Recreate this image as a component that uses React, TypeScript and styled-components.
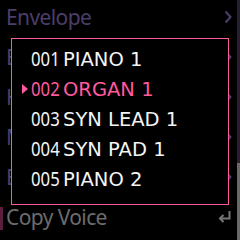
import React from "react";
import styled, {createGlobalStyle} from "styled-components";

const GlobalStyle = createGlobalStyle`
  html, body {
    margin: 0;
    padding: 0;
    background: #000;
    overflow: hidden;
  }
`;

const menuItems = [
    {label: "Envelope", sub: true},
    {label: "Effects", sub: true},
    {label: "Harmonics", sub: true},
    {label: "Modulation", sub: true},
    {label: "EQ", sub: true},
    {label: "Copy Voice", sub: false, marked: true},
];

const voices = [
    {num: "001", name: "PIANO 1"},
    {num: "002", name: "ORGAN 1"},
    {num: "003", name: "SYN LEAD 1"},
    {num: "004", name: "SYN PAD 1"},
    {num: "005", name: "PIANO 2"},
];

const selectedVoice = 1;

const Chevron = () => (
    <svg width="8" height="14" viewBox="0 0 8 14">
        <path d="M1.5 1.5 L6.5 7 L1.5 12.5" fill="none" stroke="#4d3f6e" strokeWidth="2"/>
    </svg>
);

const ReturnIcon = () => (
    <svg width="15" height="14" viewBox="0 0 15 14">
        <path d="M12.5 1 V8.5 H3" fill="none" stroke="#777" strokeWidth="2"/>
        <path d="M6.5 5 L3 8.5 L6.5 12" fill="none" stroke="#777" strokeWidth="2"/>
    </svg>
);

const App: React.FC = () => {
    return (
        <>
            <GlobalStyle/>
            <Screen>
                <MenuList>
                    {menuItems.map((item) => (
                        <MenuRow key={item.label} marked={!!item.marked}>
                            <MenuLabel dim={item.sub}>{item.label}</MenuLabel>
                            {item.sub ? <Chevron/> : <ReturnIcon/>}
                        </MenuRow>
                    ))}
                </MenuList>
                <ScrollTrack>
                    <ScrollThumb/>
                </ScrollTrack>
                <Popup>
                    {voices.map((v, i) => (
                        <VoiceRow key={v.num} selected={i === selectedVoice}>
                            <Caret selected={i === selectedVoice}/>
                            <VoiceNum>{v.num}</VoiceNum>
                            <VoiceName>{v.name}</VoiceName>
                        </VoiceRow>
                    ))}
                </Popup>
            </Screen>
        </>
    );
};

export default App;

const Screen = styled.div`
  position: relative;
  width: 240px;
  height: 240px;
  background: #000;
  display: flex;
  overflow: hidden;
  font-family: "Noto Sans", "Open Sans", sans-serif;
`;

const MenuList = styled.div`
  flex: 1;
  display: flex;
  flex-direction: column;
  margin-top: -3px;
`;

const MenuRow = styled.div<{ marked: boolean }>`
  height: 40px;
  flex-shrink: 0;
  display: flex;
  align-items: center;
  justify-content: space-between;
  padding: 0 5px 0 6px;
  background: ${({marked}) => marked
    ? "linear-gradient(#5a1f3d, #5a1f3d) 0 10px / 3px 23px no-repeat"
    : "none"};
`;

const MenuLabel = styled.span<{ dim: boolean }>`
  font-size: 21px;
  letter-spacing: -0.6px;
  color: ${({dim}) => dim ? "#4b3e68" : "#6c6c6c"};
`;

const ScrollTrack = styled.div`
  width: 3px;
  height: 240px;
  background: #281f31;
  display: flex;
  flex-direction: column;
  justify-content: flex-end;
`;

const ScrollThumb = styled.div`
  height: 77px;
  background: #696969;
`;

const Popup = styled.div`
  position: absolute;
  left: 11px;
  top: 38px;
  width: 216px;
  height: 160px;
  border: 1px solid #fb5a9c;
  background: #000;
  padding-top: 5px;
  box-sizing: content-box;
  display: flex;
  flex-direction: column;
`;

const VoiceRow = styled.div<{ selected: boolean }>`
  height: 30px;
  line-height: 30px;
  display: flex;
  align-items: baseline;
  padding-left: 10px;
  font-family: "DejaVu Sans", "Noto Sans", sans-serif;
  font-size: 19.5px;
  color: ${({selected}) => selected ? "#ff5a9d" : "#f4f4f4"};
  white-space: nowrap;
`;

const Caret = styled.span<{ selected: boolean }>`
  align-self: center;
  width: 0;
  height: 0;
  border-top: 5px solid transparent;
  border-bottom: 5px solid transparent;
  border-left: 6px solid ${({selected}) => selected ? "#ff5a9d" : "transparent"};
  margin-right: 3px;
`;

const VoiceNum = styled.span`
  display: inline-block;
  width: 33px;
  margin-right: -1px;
  flex-shrink: 0;
  font-family: "Noto Sans", sans-serif;
  font-size: 19px;
  transform: scaleX(0.88);
  transform-origin: left center;
`;

const VoiceName = styled.span`
  letter-spacing: 0;
`;
